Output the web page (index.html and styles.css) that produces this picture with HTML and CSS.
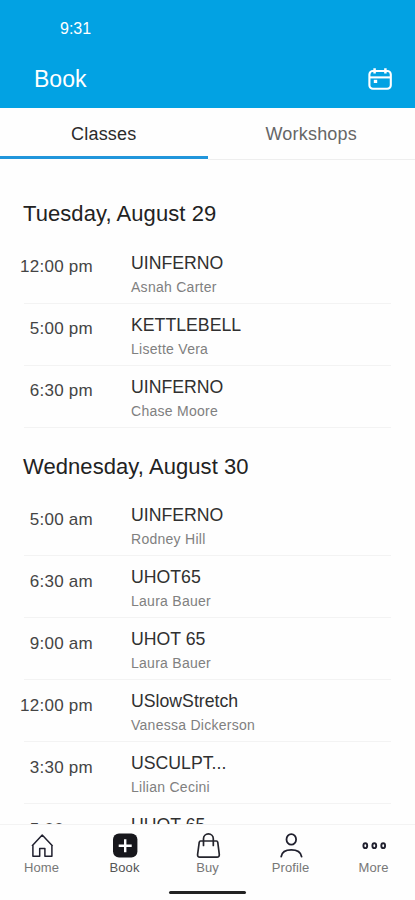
FILE: index.html
```html
<!DOCTYPE html>
<html lang="en">
<head>
<meta charset="utf-8">
<meta name="viewport" content="width=device-width">
<title>Book</title>
<link rel="stylesheet" href="styles.css">
</head>
<body>
<header class="header">
  <div class="clock">9:31</div>
  <div class="titlebar">
    <h1>Book</h1>
    <svg class="calendar" width="26" height="24" viewBox="0 0 26 24" fill="none" stroke="#fff" stroke-width="2.1">
      <rect x="2.4" y="4" width="21.4" height="17.8" rx="3.5"/>
      <path d="M2.2 10.4H23.8"/><path d="M7.6 1.2V6.4M18.4 1.2V6.4" stroke-width="2.5"/>
      <rect x="6.8" y="12.8" width="3.4" height="3.2" fill="#fff" stroke="none"/>
    </svg>
  </div>
</header>
<nav class="tabs">
  <div class="tab active">Classes</div>
  <div class="tab">Workshops</div>
</nav>
<main class="schedule">
  <section>
    <h2>Tuesday, August 29</h2>
    <div class="row"><time>12:00 pm</time><div><div class="name">UINFERNO</div><div class="coach">Asnah Carter</div></div></div>
    <div class="row"><time>5:00 pm</time><div><div class="name">KETTLEBELL</div><div class="coach">Lisette Vera</div></div></div>
    <div class="row"><time>6:30 pm</time><div><div class="name">UINFERNO</div><div class="coach">Chase Moore</div></div></div>
  </section>
  <section>
    <h2>Wednesday, August 30</h2>
    <div class="row"><time>5:00 am</time><div><div class="name">UINFERNO</div><div class="coach">Rodney Hill</div></div></div>
    <div class="row"><time>6:30 am</time><div><div class="name">UHOT65</div><div class="coach">Laura Bauer</div></div></div>
    <div class="row"><time>9:00 am</time><div><div class="name">UHOT 65</div><div class="coach">Laura Bauer</div></div></div>
    <div class="row"><time>12:00 pm</time><div><div class="name">USlowStretch</div><div class="coach">Vanessa Dickerson</div></div></div>
    <div class="row"><time>3:30 pm</time><div><div class="name">USCULPT...</div><div class="coach">Lilian Cecini</div></div></div>
    <div class="row"><time>5:00 pm</time><div><div class="name">UHOT 65</div></div></div>
  </section>
</main>
<footer class="bottom">
  <div class="items">
    <div class="item">
      <svg width="28" height="28" viewBox="0 0 28 28" fill="none" stroke="#20202e" stroke-width="1.5" stroke-linejoin="round"><path d="M4.9 13.2V24.2H11.7V16.6H16.9V24.2H23.9V13.2M4 14L14.2 3L24.6 14"/></svg>
      <span>Home</span>
    </div>
    <div class="item current">
      <svg width="28" height="28" viewBox="0 0 28 28"><rect x="2" y="1.6" width="24.4" height="24" rx="6" fill="#17171c"/><path d="M14.2 7.2V20.2M7.7 13.7H20.7" stroke="#fff" stroke-width="2.4"/></svg>
      <span>Book</span>
    </div>
    <div class="item">
      <svg width="28" height="28" viewBox="0 0 28 28" fill="none" stroke="#24242c" stroke-width="1.7" stroke-linejoin="round" stroke-linecap="round"><path d="M6.5 9H22.5Q23.5 9 23.8 10.5L25.3 22.5Q25.4 25.2 23 25.2H5.8Q3.4 25.2 3.6 22.5L5.2 10.5Q5.5 9 6.5 9Z"/><path d="M9.5 13.5V6.8A4.9 4.9 0 0 1 19.3 6.8V13.5"/></svg>
      <span>Buy</span>
    </div>
    <div class="item">
      <svg width="28" height="28" viewBox="0 0 28 28" fill="none" stroke="#20202e" stroke-width="1.8" stroke-linecap="round"><ellipse cx="14.3" cy="7.4" rx="4.8" ry="5.3"/><path d="M4.2 24.6C5 19.5 8.2 17.9 14.3 17.9S23.6 19.5 24.6 24.6"/></svg>
      <span>Profile</span>
    </div>
    <div class="item">
      <svg width="28" height="28" viewBox="0 0 28 28" fill="none" stroke="#20202e" stroke-width="1.9"><ellipse cx="5.3" cy="13.7" rx="1.9" ry="2.4"/><ellipse cx="14.3" cy="13.7" rx="1.9" ry="2.4"/><ellipse cx="23.2" cy="13.7" rx="1.9" ry="2.4"/></svg>
      <span>More</span>
    </div>
  </div>
  <div class="handle"></div>
</footer>
</body>
</html>
```
FILE: styles.css
```css
* { box-sizing: border-box; }
body {
  margin: 0;
  height: 900px;
  display: flex;
  flex-direction: column;
  overflow: hidden;
  background: #fefefe;
  color: #222;
  font-family: "Liberation Sans", Arial, sans-serif;
}
.header { height: 108px; flex: none; background: #02a2e3; color: #fff; }
.clock { padding: 19px 0 0 60px; font-size: 16px; line-height: 20px; }
.titlebar {
  display: flex;
  justify-content: space-between;
  align-items: center;
  height: 32px;
  margin-top: 24px;
  padding: 0 22px 0 34px;
}
h1 { margin: 0; font-size: 23px; font-weight: 400; line-height: 32px; }
.tabs { display: flex; height: 52px; flex: none; }
.tab {
  flex: 1;
  padding-top: 14px;
  text-align: center;
  font-size: 18px;
  line-height: 24px;
  letter-spacing: 0.2px;
  color: #666;
  border-bottom: 1px solid #eee;
}
.tab.active { color: #2b2b2b; border-bottom: 0; box-shadow: inset 0 -1px #fefefe, inset 0 -4px #2196db; }
.schedule { flex: 1; min-height: 0; overflow: hidden; padding: 27px 24px 0; }
h2 { margin: 0 0 0 -1px; height: 55px; font-size: 22px; font-weight: 400; line-height: 54px; letter-spacing: 0.07px; }
section + section { margin-top: 12px; }
section + section h2 { height: 54px; }
.row {
  display: grid;
  grid-template-columns: 69px 1fr;
  column-gap: 38px;
  height: 62px;
  border-bottom: 1px solid #f3f3f3;
}
time {
  justify-self: end;
  padding-top: 15px;
  white-space: nowrap;
  font-size: 17px;
  line-height: 20px;
  letter-spacing: 0.25px;
  color: #444;
}
section + section time { padding-top: 16px; }
.name { padding-top: 11px; font-size: 17.7px; line-height: 20px; color: #303030; }
.coach { margin-top: 5px; font-size: 14px; line-height: 18px; letter-spacing: 0.27px; color: #808080; }
.bottom { height: 76px; flex: none; background: #fefefe; border-top: 1px solid #f3f3f3; }
.items { display: flex; height: 66px; padding-top: 7px; }
.item {
  flex: 1;
  display: flex;
  flex-direction: column;
  align-items: center;
  font-size: 13px;
  line-height: 16px;
  letter-spacing: 0.1px;
  color: #777;
}
.current { color: #555; }
.handle { width: 77px; height: 3px; margin: 0 auto; border-radius: 1.5px; background: #222; }
```
